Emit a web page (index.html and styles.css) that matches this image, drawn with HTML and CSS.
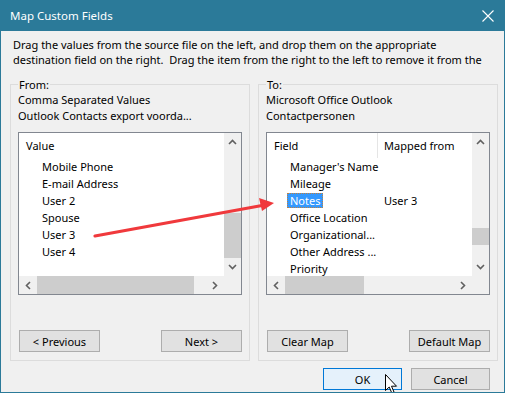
FILE: index.html
```html
<!DOCTYPE html>
<html lang="en">
<head>
    <meta charset="UTF-8">
    <meta name="viewport" content="width=device-width, initial-scale=1.0">
    <title>Map Custom Fields</title>
    <link rel="stylesheet" href="styles.css">
</head>
<body>

<div class="window">
    <div class="titlebar">
        <span class="title">Map Custom Fields</span>
        <svg class="close" width="12" height="12" viewBox="0 0 12 12">
            <path d="M0.5 0.5 L11.5 11.5 M11.5 0.5 L0.5 11.5" stroke="#fff" stroke-width="1.1" fill="none"/>
        </svg>
    </div>

    <div class="intro">
        <div>Drag the values from the source file on the left, and drop them on the appropriate</div>
        <div>destination field on the right.&nbsp; Drag the item from the right to the left to remove it from the</div>
    </div>

    <div class="groups">
        <fieldset class="group">
            <legend>From:</legend>
            <p class="source">Comma Separated Values</p>
            <p class="source">Outlook Contacts export voorda...</p>

            <div class="list">
                <div class="view">
                    <div class="head">
                        <span class="col col-value">Value</span>
                    </div>
                    <ul class="rows">
                        <li>Mobile Phone</li>
                        <li>E-mail Address</li>
                        <li>User 2</li>
                        <li>Spouse</li>
                        <li>User 3</li>
                        <li>User 4</li>
                    </ul>
                </div>
                <div class="vscroll">
                    <div class="arrow"><svg width="9" height="6" viewBox="0 0 9 6"><path d="M1 5 L4.5 1.5 L8 5" stroke="#606060" stroke-width="1.6" fill="none"/></svg></div>
                    <div class="track"><div class="thumb thumb-from"></div></div>
                    <div class="arrow"><svg width="9" height="6" viewBox="0 0 9 6"><path d="M1 1 L4.5 4.5 L8 1" stroke="#606060" stroke-width="1.6" fill="none"/></svg></div>
                </div>
                <div class="hscroll">
                    <div class="arrow"><svg width="6" height="9" viewBox="0 0 6 9"><path d="M5 1 L1.5 4.5 L5 8" stroke="#606060" stroke-width="1.6" fill="none"/></svg></div>
                    <div class="track"><div class="thumb hthumb-from"></div></div>
                    <div class="arrow"><svg width="6" height="9" viewBox="0 0 6 9"><path d="M1 1 L4.5 4.5 L1 8" stroke="#606060" stroke-width="1.6" fill="none"/></svg></div>
                </div>
                <div class="corner"></div>
            </div>

            <div class="buttons">
                <button class="btn">&lt; Previous</button>
                <button class="btn">Next &gt;</button>
            </div>
        </fieldset>

        <fieldset class="group">
            <legend>To:</legend>
            <p class="source">Microsoft Office Outlook</p>
            <p class="source">Contactpersonen</p>

            <div class="list">
                <div class="view">
                    <div class="head">
                        <span class="col col-field">Field</span>
                        <span class="col col-mapped">Mapped from</span>
                    </div>
                    <ul class="rows">
                        <li><span class="field">Manager's Name</span></li>
                        <li><span class="field">Mileage</span></li>
                        <li><span class="field"><span class="selected">Notes</span></span><span class="mapped">User 3</span></li>
                        <li><span class="field">Office Location</span></li>
                        <li><span class="field">Organizational...</span></li>
                        <li><span class="field">Other Address ...</span></li>
                        <li><span class="field">Priority</span></li>
                    </ul>
                </div>
                <div class="vscroll">
                    <div class="arrow"><svg width="9" height="6" viewBox="0 0 9 6"><path d="M1 5 L4.5 1.5 L8 5" stroke="#606060" stroke-width="1.6" fill="none"/></svg></div>
                    <div class="track"><div class="thumb thumb-to"></div></div>
                    <div class="arrow"><svg width="9" height="6" viewBox="0 0 9 6"><path d="M1 1 L4.5 4.5 L8 1" stroke="#606060" stroke-width="1.6" fill="none"/></svg></div>
                </div>
                <div class="hscroll">
                    <div class="arrow"><svg width="6" height="9" viewBox="0 0 6 9"><path d="M5 1 L1.5 4.5 L5 8" stroke="#606060" stroke-width="1.6" fill="none"/></svg></div>
                    <div class="track"><div class="thumb hthumb-to"></div></div>
                    <div class="arrow"><svg width="6" height="9" viewBox="0 0 6 9"><path d="M1 1 L4.5 4.5 L1 8" stroke="#606060" stroke-width="1.6" fill="none"/></svg></div>
                </div>
                <div class="corner"></div>
            </div>

            <div class="buttons">
                <button class="btn">Clear Map</button>
                <button class="btn">Default Map</button>
            </div>
        </fieldset>
    </div>

    <div class="footer">
        <button class="btn btn-default">OK</button>
        <button class="btn">Cancel</button>
    </div>

    <!-- drag annotation drawn over the dialog -->
    <svg class="drag-arrow" width="505" height="394" viewBox="0 0 505 394">
        <line x1="95" y1="236" x2="262" y2="205.5" stroke="#f0393c" stroke-width="3.2" stroke-linecap="round"/>
        <polygon points="274,203 259,198 262,211" fill="#f0393c"/>
    </svg>

    <svg class="cursor" width="13" height="20" viewBox="0 0 13 20">
        <path d="M0.5 0.5 L0.5 16.5 L4.2 13 L6.8 19 L9 18 L6.5 12.2 L11.5 12.2 Z" fill="#fff" stroke="#000" stroke-width="1"/>
    </svg>
</div>

</body>
</html>
```

FILE: styles.css
```css
body {
    margin: 0;
    font-family: "Noto Sans", "Open Sans", sans-serif;
    font-size: 11px;
    color: #000;
}
.window {
    position: relative;
    width: 505px;
    height: 393px;
    box-sizing: border-box;
    background: #f0f0f0;
    border: 1px solid #2b7a99;
    border-top: none;
    overflow: hidden;
}
.titlebar {
    height: 31px;
    margin: 0 -1px;
    background: #2b7a99;
    color: #fff;
    display: flex;
    align-items: center;
    justify-content: space-between;
    padding: 0 10px 0 10px;
}
.title {
    font-size: 11.5px;
}
.close {
    margin-right: 1px;
}
.intro {
    padding: 6px 0 0 12px;
    line-height: 15px;
    white-space: nowrap;
}
.groups {
    display: flex;
    gap: 8px;
    padding-left: 9px;
    margin-top: 11px;
}
.group {
    width: 240px;
    height: 283px;
    box-sizing: border-box;
    margin: 0;
    padding: 0 7px 0 7px;
    border: 1px solid #dcdcdc;
}
.group legend {
    padding: 0 1px;
    line-height: 13px;
}
.source {
    margin: 0;
    line-height: 16px;
    white-space: nowrap;
}
.source:first-of-type {
    margin-top: 1px;
}
.list {
    margin-top: 8px;
    height: 163px;
    box-sizing: border-box;
    border: 1px solid #828790;
    background: #fff;
    display: grid;
    grid-template-columns: 1fr 17px;
    grid-template-rows: 1fr 18px;
}
.view {
    overflow: hidden;
}
.head {
    display: flex;
    height: 25px;
    align-items: stretch;
}
.col {
    display: flex;
    align-items: center;
}
.col-value {
    padding-left: 7px;
}
.col-field {
    width: 103px;
    padding-left: 7px;
    border-right: 1px solid #e5e5e5;
}
.col-mapped {
    padding-left: 6px;
}
.rows {
    list-style: none;
    margin: 0;
    padding: 0;
}
.rows li {
    display: flex;
    height: 17px;
    line-height: 17px;
    padding-left: 23px;
    white-space: nowrap;
}
.field {
    width: 87px;
}
.mapped {
    padding-left: 7px;
}
.selected {
    margin-left: -3px;
    padding: 0 3px;
    background: #3399ff;
    color: #fff;
    outline: 1px dotted #c08040;
    outline-offset: -1px;
}
.vscroll {
    background: #f0f0f0;
    display: flex;
    flex-direction: column;
}
.vscroll .arrow {
    height: 18px;
    display: flex;
    align-items: center;
    justify-content: center;
}
.vscroll .track {
    flex: 1;
}
.thumb {
    background: #cdcdcd;
}
.vscroll .thumb {
    width: 100%;
}
.thumb-from {
    margin-top: 62px;
    height: 45px;
}
.thumb-to {
    margin-top: 77px;
    height: 17px;
}
.hscroll {
    background: #f0f0f0;
    display: flex;
}
.hscroll .arrow {
    width: 18px;
    display: flex;
    align-items: center;
    justify-content: center;
}
.hscroll .track {
    flex: 1;
}
.hscroll .thumb {
    height: 100%;
}
.hthumb-from {
    width: 157px;
}
.hthumb-to {
    width: 79px;
}
.corner {
    background: #f0f0f0;
}
.buttons {
    display: flex;
    justify-content: space-between;
    margin-top: 35px;
    padding-left: 1px;
}
.btn {
    width: 81px;
    height: 22px;
    padding: 0;
    font-family: inherit;
    font-size: 11px;
    color: #000;
    background: #e1e1e1;
    border: 1px solid #adadad;
}
.btn-default {
    width: 79px;
    background: #e5f1fb;
    border-color: #0078d7;
}
.footer {
    display: flex;
    justify-content: flex-end;
    gap: 9px;
    padding: 7px 14px 0 0;
}
.footer .btn {
    width: 79px;
}
.drag-arrow {
    position: absolute;
    left: -1px;
    top: 0;
    pointer-events: none;
}
.cursor {
    position: absolute;
    left: 384px;
    top: 374px;
}
```
